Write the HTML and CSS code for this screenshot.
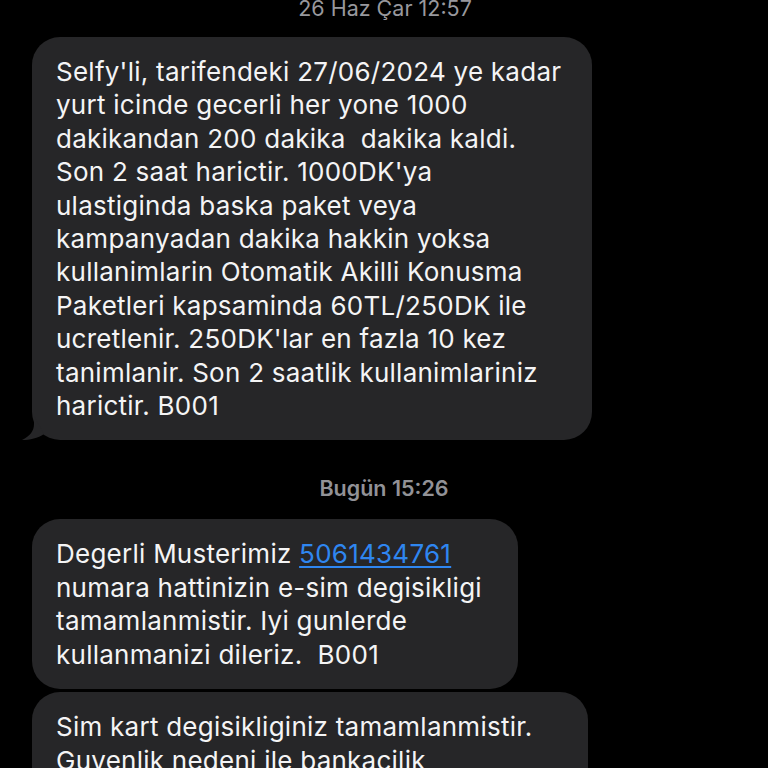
FILE: index.html
```html
<!DOCTYPE html>
<html lang="tr">
<head>
<meta charset="utf-8">
<title>Mesajlar</title>
<link rel="stylesheet" href="styles.css">
</head>
<body>
<main class="thread">
  <div class="stamp stamp-top">26 Haz Çar 12:57</div>

  <div class="bubble b1 tail">
    <p class="msg">Selfy'li, tarifendeki 27/06/2024 ye kadar<br>yurt icinde gecerli her yone 1000<br>dakikandan 200 dakika&nbsp; dakika kaldi.<br>Son 2 saat harictir. 1000DK'ya<br>ulastiginda baska paket veya<br>kampanyadan dakika hakkin yoksa<br>kullanimlarin Otomatik Akilli Konusma<br>Paketleri kapsaminda 60TL/250DK ile<br>ucretlenir. 250DK'lar en fazla 10 kez<br>tanimlanir. Son 2 saatlik kullanimlariniz<br>harictir. B001</p>
    <svg class="tail-svg" width="24" height="24" viewBox="0 0 24 24" aria-hidden="true">
      <path d="M12 0 L12 8 C12 15 8 20 0 24 C8 24 16 22 22 18 Z" fill="#262628"/>
    </svg>
  </div>

  <div class="stamp stamp-mid"><b>Bugün</b> 15:26</div>

  <div class="bubble b2">
    <p class="msg">Degerli Musterimiz <a class="link" href="#">5061434761</a><br>numara hattinizin e-sim degisikligi<br>tamamlanmistir. Iyi gunlerde<br>kullanmanizi dileriz.&nbsp; B001</p>
  </div>

  <div class="bubble b3">
    <p class="msg">Sim kart degisikliginiz tamamlanmistir.<br>Guvenlik nedeni ile bankacilik<br>islemleriniz bir sure kisitlanabilir.</p>
  </div>
</main>
</body>
</html>
```

FILE: styles.css
```css
html, body {
  margin: 0;
  padding: 0;
  background: #000;
  height: 768px;
  overflow: hidden;
}

.thread {
  display: flex;
  flex-direction: column;
  align-items: flex-start;
  padding-left: 32px;
  font-family: Inter, "Noto Sans", "DejaVu Sans", sans-serif;
}

.stamp {
  align-self: stretch;
  margin-left: -32px;
  text-align: center;
  color: #8e8e93;
  font-size: 21.5px;
  line-height: 24px;
  height: 24px;
}

.stamp-top {
  margin-top: -4px;
  margin-bottom: 17px;
  padding-left: 2px;
  color: #98989d;
}

.stamp-mid {
  margin-top: 36px;
  margin-bottom: 19px;
  font-weight: 600;
  color: #929297;
}

.stamp-mid b {
  font-weight: 600;
}

.bubble {
  position: relative;
  box-sizing: border-box;
  background: #262628;
  border-radius: 28px;
  padding: 18px 0 18px 24px;
}

.b1 { width: 560px; }
.b2 { width: 486px; }
.b3 { width: 556px; margin-top: 3px; }

.msg {
  margin: 0;
  color: #f4f4f5;
  font-size: 26px;
  letter-spacing: 0.25px;
  line-height: 33.4px;
  white-space: nowrap;
}

.link {
  color: #2f86f0;
  text-decoration: underline;
  text-underline-offset: 3px;
}

.tail-svg {
  position: absolute;
  left: -10px;
  bottom: 0;
}
```
